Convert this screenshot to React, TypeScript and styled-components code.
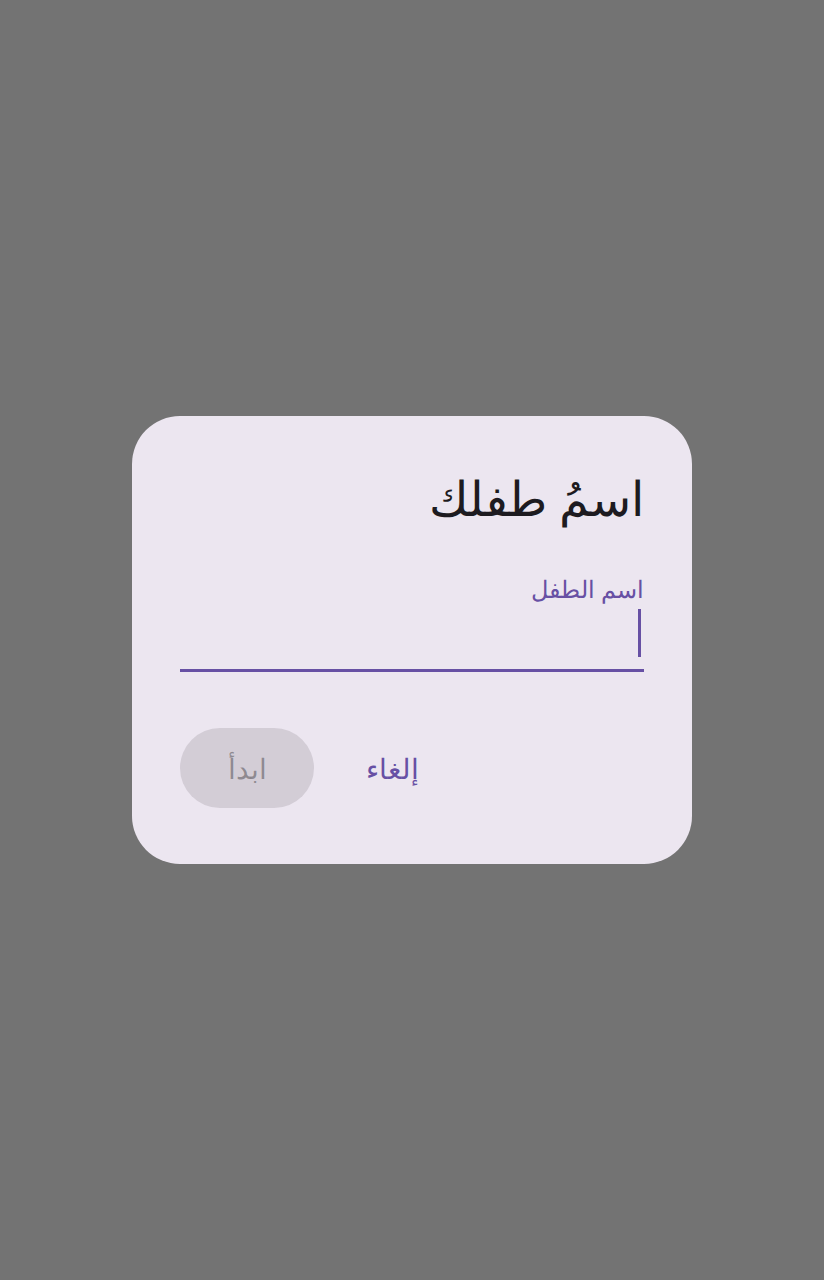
import React from "react";
import styled, { createGlobalStyle } from "styled-components";

const Global = createGlobalStyle`
  html, body { margin: 0; padding: 0; background: #737373; }
  body { font-family: "Noto Sans", "DejaVu Sans", sans-serif; }
`;

const Backdrop = styled.div`
  width: 824px;
  height: 1280px;
  background: #737373;
  display: flex;
  align-items: center;
  justify-content: center;
`;

const Dialog = styled.div`
  direction: rtl;
  width: 560px;
  height: 448px;
  box-sizing: border-box;
  background: #ece6f0;
  border-radius: 48px;
  padding: 46px 48px 56px;
  display: flex;
  flex-direction: column;
`;

const Title = styled.h1`
  margin: 0;
  font-weight: 300;
  font-size: 48px;
  line-height: 72px;
  color: #1d1b20;
`;

const Field = styled.div`
  margin-top: 39px;
  display: flex;
  flex-direction: column;
  border-bottom: 3px solid #6750a4;
  padding-bottom: 12px;
`;

const Label = styled.div`
  font-size: 24px;
  font-weight: 300;
  line-height: 32px;
  margin-bottom: 4px;
  color: #6750a4;
`;

const Caret = styled.div`
  width: 3px;
  height: 48px;
  margin-right: 3px;
  background: #6750a4;
`;

const Actions = styled.div`
  margin-top: auto;
  display: flex;
  justify-content: flex-end;
  align-items: center;
  gap: 28px;
`;

const TextButton = styled.button`
  height: 80px;
  padding: 0 24px;
  border: none;
  background: transparent;
  border-radius: 40px;
  font-family: inherit;
  font-size: 28px;
  font-weight: 300;
  color: #6750a4;
`;

const FilledButton = styled.button`
  height: 80px;
  width: 134px;
  border: none;
  border-radius: 40px;
  background: rgba(29, 27, 32, 0.12);
  font-family: inherit;
  font-size: 28px;
  font-weight: 300;
  color: rgba(29, 27, 32, 0.38);
`;

export default function App() {
  return (
    <>
      <Global />
      <Backdrop>
        <Dialog>
          <Title>اسمُ طفلك</Title>
          <Field>
            <Label>اسم الطفل</Label>
            <Caret />
          </Field>
          <Actions>
            <TextButton>إلغاء</TextButton>
            <FilledButton disabled>ابدأ</FilledButton>
          </Actions>
        </Dialog>
      </Backdrop>
    </>
  );
}
